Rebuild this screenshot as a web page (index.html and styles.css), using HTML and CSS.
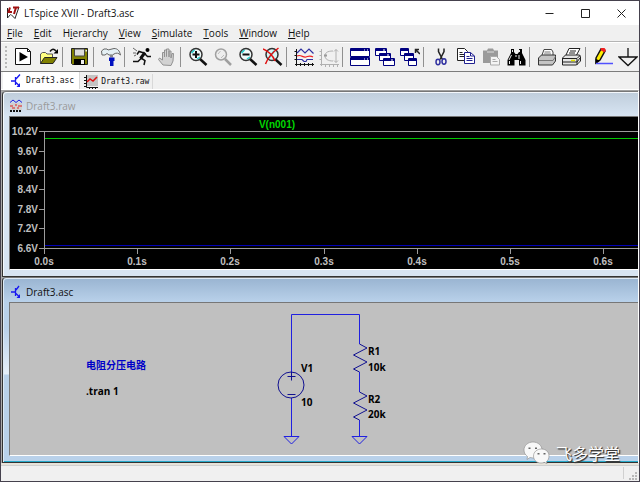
FILE: index.html
```html
<!DOCTYPE html>
<html lang="en">
<head>
    <meta charset="UTF-8">
    <meta name="viewport" content="width=device-width, initial-scale=1.0">
    <title>LTspice XVII - Draft3.asc</title>
    <link rel="stylesheet" href="styles.css">
</head>
<body>
<div class="app">

    <header class="titlebar">
        <svg class="logo" width="14" height="14" viewBox="0 0 14 14">
            <path d="M1.500 2v10l3-3.500M5 8.500l4 4L13 1" fill="none" stroke="#222" />
            <path d="M4 1.500L2.500 6H6M7 1.500h6M10 1.500L8 8" fill="none" stroke="#a01010" stroke-width="2" />
        </svg>
        <span class="title">LTspice XVII - Draft3.asc</span>
        <div class="controls">
            <button type="button" aria-label="Minimize"><svg width="9" height="9" viewBox="0 0 9 9"><path d="M.5 4.500h8" /></svg></button>
            <button type="button" aria-label="Maximize"><svg width="9" height="9" viewBox="0 0 9 9"><path d="M.5.5h8v8h-8z" /></svg></button>
            <button type="button" aria-label="Close"><svg width="9" height="9" viewBox="0 0 9 9"><path d="M.5.5l8 8M8.500.5l-8 8" /></svg></button>
        </div>
    </header>

    <nav class="menu">
        <button type="button"><u>F</u>ile</button>
        <button type="button"><u>E</u>dit</button>
        <button type="button">H<u>i</u>erarchy</button>
        <button type="button"><u>V</u>iew</button>
        <button type="button"><u>S</u>imulate</button>
        <button type="button"><u>T</u>ools</button>
        <button type="button"><u>W</u>indow</button>
        <button type="button"><u>H</u>elp</button>
    </nav>

    <div class="toolbar">
        <span class="grip"></span>
        <button type="button" aria-label="New schematic">
            <svg viewBox="0 0 20 20"><path d="M1.500 1.500h12l3 3v13h-15z" fill="#fff" stroke="#111" /><path d="M13.500 1.500v3h3" fill="none" stroke="#111" /><path d="M5.500 5v9.500l8.500-4.500z" /></svg>
        </button>
        <button type="button" aria-label="Open">
            <svg viewBox="0 0 20 20"><path d="M1.500 16.500V7l2-1.500h3L8 7h5.500v3" fill="#ffff80" stroke="#555" /><path d="M1.500 16.500l4-6h12.500l-4 6z" fill="#808000" stroke="#222" /><path d="M11 4.500c2-3 4-3 6-.5" fill="none" stroke="#111" stroke-width="1.500" /><path d="M19 2v4.500h-4.500z" /></svg>
        </button>
        <span class="sep"></span>
        <button type="button" aria-label="Save">
            <svg viewBox="0 0 20 20"><path d="M1.500 1.500h16v16h-15l-1-1z" fill="#808000" stroke="#222" /><path d="M4.500 2h10v7h-10z" fill="#dcdcdc" stroke="#444" /><path d="M4 12h11v6H4z" /><path d="M11 13h3v4h-3zM15.500 3H17v1.500h-1.500z" fill="#f0f0f0" /></svg>
        </button>
        <span class="sep"></span>
        <button type="button" aria-label="Control panel">
            <svg viewBox="0 0 20 20"><path d="M.5 4L3 2h3l1 1 6-1.500c3.500 0 5.500 2 6.500 6.500-2-2-4-2.500-6.500-1L11.500 8H8L6 6.500 4 8H1z" fill="#e4f0f4" stroke="#666" /><path d="M9 8h3v2.500H9z" fill="#888" /><path d="M8 10.500h5.500V14h-1v5H9v-5H8z" fill="#0010c0" /></svg>
        </button>
        <span class="sep"></span>
        <button type="button" aria-label="Run">
            <svg viewBox="0 0 20 20"><circle cx="15.500" cy="3" r="2" /><path d="M13 5.500l-4.500 6" stroke="#111" stroke-width="3" /><path d="M9 11l4 2.500-1 4.500M9 11.500l-3 3H1M12 6L7 4.500 5 7.500M13 7l2.500 2.500H19" fill="none" stroke="#111" stroke-width="1.500" /><path d="M1 1l4 3M1 6h3M2 9l2-1" stroke="#666" /></svg>
        </button>
        <button type="button" aria-label="Halt">
            <svg viewBox="0 0 20 20"><path d="M6 18L1.500 12.500 2.500 11 5.500 13V5.500h2V10 3h2v6.500V2H12v8V4h2v7l1-4.500h1.500L16 14l-2 4.500z" fill="#d2d2d2" stroke="#929292" /></svg>
        </button>
        <span class="sep"></span>
        <button type="button" aria-label="Zoom area">
            <svg viewBox="0 0 20 20"><path d="M12 12l6.500 6" stroke="#111" stroke-width="2.500" /><circle cx="8" cy="7.500" r="6" fill="#f0fafa" stroke="#333" stroke-width="1.500" /><path d="M3.500 6l3-3M12 10l-3 2" stroke="#20d0d0" stroke-width="1.500" /><path d="M8 4v7M4.500 7.500h7" stroke="#111" stroke-width="2" /></svg>
        </button>
        <button type="button" aria-label="Pan">
            <svg viewBox="0 0 20 20"><path d="M12 12l6 6" stroke="#a0a0a0" stroke-width="2.500" /><circle cx="8" cy="7.500" r="5.500" fill="#ededed" stroke="#a0a0a0" stroke-width="1.500" /><path d="M5 7l2.500-3M8 11l3-3" stroke="#bbb" /></svg>
        </button>
        <button type="button" aria-label="Zoom back">
            <svg viewBox="0 0 20 20"><path d="M12 12l6.500 6" stroke="#111" stroke-width="2.500" /><circle cx="8" cy="7.500" r="6" fill="#f0fafa" stroke="#333" stroke-width="1.500" /><path d="M3.500 6l3-3M12 10l-3 2" stroke="#20d0d0" stroke-width="1.500" /><path d="M4.500 7.500h7" stroke="#111" stroke-width="2" /></svg>
        </button>
        <button type="button" aria-label="Zoom to fit">
            <svg viewBox="0 0 20 20"><path d="M12 12l6.500 6" stroke="#111" stroke-width="2.500" /><circle cx="9" cy="7.500" r="6" fill="#d8f6f6" stroke="#333" stroke-width="1.500" /><path d="M11 4l-5 7" stroke="#20d0d0" stroke-width="1.500" /><path d="M0 2c5 2 10 7 12 12M15.500 1C10 5 5 10 2.500 17" fill="none" stroke="#e01010" stroke-width="1.500" /></svg>
        </button>
        <span class="sep"></span>
        <button type="button" aria-label="Pick visible traces">
            <svg viewBox="0 0 20 20"><path d="M2.500 2v17M1 17.500h19" stroke="#111" /><path d="M.5 4.500h2m-2 4h2m-2 4h2M6.500 16v3m4-3v3m4-3v3m4-3v3" stroke="#111" /><path d="M3 6l4-4 4 4 4-4 4.500 4.500M3 12.500h5l2 2h2l1-2h6" fill="none" stroke="#3030a0" stroke-width="1.200" /><path d="M3 9c4-2 6 2 9 1s4-2 7 0" fill="none" stroke="#f02020" stroke-width="1.200" /></svg>
        </button>
        <button type="button" aria-label="Autorange">
            <svg viewBox="0 0 20 20"><path d="M2.500 2v17M1 17.500h19M.5 4.500h2m-2 4h2m-2 4h2M6.500 17v3m4-3v3m4-3v3m4-3v3M17 2.500v13M15 4.500l2-2 2 2M15 13.500l2 2 2-2M14 4C8 4 6 6 6 9s3 5 8 5" fill="none" stroke="#b0b0b0" /><path d="M5 8.500h3" stroke="#999" stroke-width="2" /></svg>
        </button>
        <span class="sep"></span>
        <button type="button" aria-label="Tile windows">
            <svg viewBox="0 0 20 20"><path d="M.5 1.500h19v8H.5zM.5 10.500h19v8H.5z" fill="#fff" stroke="#000080" /><path d="M1 2h18v2H1zM1 11h18v2H1z" fill="#000080" /><path d="M14 3h1M17 3h1M14 12h1M17 12h1" stroke="#fff" /></svg>
        </button>
        <button type="button" aria-label="Cascade windows">
            <svg viewBox="0 0 20 20"><g fill="#fff" stroke="#000080"><path d="M.5 1.500h11v7H.5z" /><path d="M4.500 6.500h11v7h-11z" /><path d="M8.500 11.500h11v7h-11z" /></g><path d="M1 2h10v2H1zM5 7h10v2H5zM9 12h10v2H9z" fill="#000080" /><path d="M8 3h2M12 8h2M16 13h2" stroke="#fff" /></svg>
        </button>
        <button type="button" aria-label="Close all windows">
            <svg viewBox="0 0 20 20"><g fill="#fff" stroke="#000080"><path d="M.5 1.500h8v7h-8z" /><path d="M4.500 6.500h9v7h-9z" /><path d="M8.500 11.500h8v7h-8z" /></g><path d="M1 2h8v2H1zM5 7h8v2H5zM9 12h7v2H9z" fill="#000080" /><path d="M15.500 6V2.500H19M15.500 2.500L20 7" fill="none" stroke="#222" stroke-width="1.500" /></svg>
        </button>
        <span class="sep"></span>
        <button type="button" aria-label="Cut">
            <svg viewBox="0 0 20 20"><path d="M7.500 1.500v3l4 8M13 1.500v3l-4 8" fill="none" stroke="#222" stroke-width="1.500" /><g fill="none" stroke="#3030a0" stroke-width="1.500"><ellipse cx="7" cy="15" rx="2" ry="2.700" /><ellipse cx="13" cy="14.500" rx="2" ry="2.700" /></g></svg>
        </button>
        <button type="button" aria-label="Copy">
            <svg viewBox="0 0 20 20"><path d="M1.500 1.500h7l3 3v9h-10z" fill="#fff" stroke="#222" /><path d="M3.500 5.500h3m-3 2h5m-5 2h5" stroke="#222" /><path d="M8.500 5.500h6l4 3.500v7.500h-10z" fill="#fff" stroke="#202090" /><path d="M14.500 5.500V9h4M10.500 9.500h3m-3 2h6m-6 2h6" fill="none" stroke="#202090" /></svg>
        </button>
        <button type="button" aria-label="Paste">
            <svg viewBox="0 0 20 20"><path d="M2 3.500h4l1-2h5l1 2h4V16H2z" fill="#9a9a9a" /><path d="M6 5h7" stroke="#ddd" /><path d="M9.500 9.500h6l3 3V18h-9z" fill="#f4f4f4" stroke="#aaa" /><path d="M11.500 12.500h3m-3 2h5" stroke="#aaa" /></svg>
        </button>
        <button type="button" aria-label="Find">
            <svg viewBox="0 0 20 20"><path d="M5 2h3v3l1.500 2h2L13 5V2h3v4l3.500 7v5.500H13V13H8.500v5.500H1.500V13L5 6z" /><path d="M6.500 3v2M13.500 3v2M5.500 8L3 13M13 8v4M10 8v2M3.500 14v3M14.500 14v3" stroke="#e8e8e8" /></svg>
        </button>
        <span class="sep"></span>
        <button type="button" aria-label="Print">
            <svg viewBox="0 0 20 20"><path d="M5 8l2-5.500h7.500L16 5v4" fill="#fff" stroke="#444" /><path d="M1.500 11l3-3h14v6l-3 4h-14z" fill="#c4c4c4" stroke="#333" /><path d="M2 13.500h14l2.500-4M7.500 5h6M7 7h7" fill="none" stroke="#777" /></svg>
        </button>
        <button type="button" aria-label="Print preview">
            <svg viewBox="0 0 20 20"><path d="M4 8l3-6.500h11L14 9" fill="#fff" stroke="#222" /><path d="M.5 11l3-3h14l1 2v4l-4 4H.5z" fill="#e4e4e4" stroke="#222" /><path d="M1 11.500h14l3-3M1 15h14l3-4M15 12v6M8 4h6M7 6h6" fill="none" stroke="#222" /><path d="M9 13.500h4" stroke="#e0e000" stroke-width="1.500" /></svg>
        </button>
        <span class="sep"></span>
        <button type="button" aria-label="Wire">
            <svg viewBox="0 0 20 20"><path d="M3 11l5-9 4 2-5 9-4 3z" fill="#ffee00" stroke="#111" stroke-width="1.500" /><path d="M2.500 12v5L7 13.500z" /><path d="M8 1h3.500L13 3l-1.500 2.500L7.500 3z" fill="#f02020" /><path d="M3 16.500h17" stroke="#5050ff" stroke-width="1.500" /></svg>
        </button>
        <button type="button" aria-label="Ground">
            <svg viewBox="0 0 20 20"><path d="M10 1v9M1 10h18l-9 8.500z" fill="none" stroke="#111" stroke-width="1.300" /></svg>
        </button>
    </div>

    <div class="tabs">
        <button type="button" class="tab active">
            <svg width="16" height="16" viewBox="0 0 16 16"><path d="M3 8h4M7.500 4v8M8 6l4-4.500M8 9.500l3 3" fill="none" stroke="#1818f0" stroke-width="1.300" /><path d="M12 10v4H8.500z" fill="#1818f0" /></svg>
            Draft3.asc
        </button>
        <button type="button" class="tab">
            <svg width="16" height="16" viewBox="0 0 16 16"><path d="M3 1h12v11H3z" fill="#c4c4c4" /><path d="M3.500 1v12.500H15" fill="none" stroke="#111" /><path d="M1 3.500h2M1 6.500h2M1 9.500h2M1 12.500h2M6.500 13v2M9.500 13v2M12.500 13v2" stroke="#111" /><path d="M4 8l3-3 3 2 4-4" fill="none" stroke="#e01010" stroke-width="1.500" /></svg>
            Draft3.raw
        </button>
    </div>

    <main class="workspace">
        <section class="window">
            <div class="window-title">
                <svg width="14" height="14" viewBox="0 0 14 14"><path d="M1 4h12v7H1z" fill="#d0d0d0" /><path d="M1 3.500L4 1l3 2.500L10 1l3 2.500" fill="none" stroke="#2020e0" /><path d="M1 7h3M6 6h2M9 7h4M3 9h3M8 9h2" stroke="#e02020" /><path d="M1 12h12" stroke="#111" stroke-width="2" stroke-dasharray="2 1" /></svg>
                Draft3.raw
            </div>
            <div class="client">
                <svg class="plot" width="100%" height="152">
                    <!-- axes -->
                    <g class="axis">
                        <path d="M34.500 14v123" />
                        <path d="M29 14.500h6M29 34.500h6M29 53.500h6M29 72.500h6M29 92.500h6M29 111.500h6M29 131.500h6" />
                        <path d="M34.500 131v6M127.500 131v6M220.500 131v6M314.500 131v6M407.500 131v6M500.500 131v6M593.500 131v6" />
                        <line x1="34" y1="14.500" x2="100%" y2="14.500" />
                        <line x1="34" y1="131.500" x2="100%" y2="131.500" />
                    </g>
                    <!-- traces -->
                    <line class="trace-green" x1="35" y1="21.500" x2="100%" y2="21.500" />
                    <line class="trace-blue" x1="35" y1="128.500" x2="100%" y2="128.500" />
                    <text class="trace-name" x="267" y="11">V(n001)</text>
                    <g class="y-labels">
                        <text x="28" y="18">10.2V</text>
                        <text x="28" y="38">9.6V</text>
                        <text x="28" y="57">9.0V</text>
                        <text x="28" y="76">8.4V</text>
                        <text x="28" y="96">7.8V</text>
                        <text x="28" y="115">7.2V</text>
                        <text x="28" y="135">6.6V</text>
                    </g>
                    <g class="x-labels">
                        <text x="34" y="148">0.0s</text>
                        <text x="127" y="148">0.1s</text>
                        <text x="220" y="148">0.2s</text>
                        <text x="314" y="148">0.3s</text>
                        <text x="407" y="148">0.4s</text>
                        <text x="500" y="148">0.5s</text>
                        <text x="593" y="148">0.6s</text>
                    </g>
                </svg>
            </div>
        </section>

        <section class="window focused">
            <div class="window-title">
                <svg width="14" height="14" viewBox="0 0 14 14"><path d="M2 7h4M6.500 3v8M7 5l3-4M7 8.500l3 3" fill="none" stroke="#1818f0" stroke-width="1.300" /><path d="M11 9v4H7.500z" fill="#1818f0" /></svg>
                Draft3.asc
            </div>
            <div class="client">
                <svg class="schematic" width="100%" height="152">
                    <!-- wires and grounds -->
                    <path class="wire" d="M281.500 69V11.500h68V41M281.500 95v38M349.500 69v20M349.500 117v16M274 133.500h15l-7.500 7.500zM342 133.500h15l-7.500 7.500z" />
                    <!-- V1, R1, R2 -->
                    <g class="part">
                        <circle cx="281" cy="82" r="13" />
                        <path d="M277.500 73.500h8M281.500 69v8.500M277.500 91.500h8" />
                        <path d="M349.500 41l7.500 4-13.500 7 13.500 7-13.500 7 6 3" />
                        <path d="M349.500 89l7.500 4-13.500 7 13.500 7-13.500 7 6 3" />
                    </g>
                    <text class="comment" x="76" y="66">电阻分压电路</text>
                    <text x="76" y="92">.tran 1</text>
                    <text x="291" y="69">V1</text>
                    <text x="291" y="103">10</text>
                    <text x="358" y="52">R1</text>
                    <text x="358" y="68">10k</text>
                    <text x="358" y="100">R2</text>
                    <text x="358" y="115">20k</text>
                </svg>
            </div>
        </section>
    </main>

    <footer class="statusbar">
        <span class="pane"></span>
        <svg width="10" height="10" viewBox="0 0 10 10"><path d="M7 1h2v2H7zM4 4h2v2H4zM7 4h2v2H7zM1 7h2v2H1zM4 7h2v2H4zM7 7h2v2H7z" fill="#b8b8b8" /></svg>
    </footer>

    <div class="watermark">
        <svg width="28" height="24" viewBox="0 0 28 24">
            <g fill="#f8f8f8" stroke="#8a8a8a" stroke-width=".6">
                <path d="M10 1c5 0 9 3.500 9 8s-4 8-9 8l-3-.5L4 18.500l.5-3C2.500 14 1 12 1 9c0-4.500 4-8 9-8z" />
                <path d="M18.500 8c4.500 0 7.500 3 7.500 7 0 2.500-1 4.500-2.500 5.500l.5 2.200-2.500-1.200c-7 2-11-2-11-6.500 0-4 3.500-7 8-7z" />
            </g>
            <path d="M5.500 6.500h2v1.500h-2zM12 6.500h2v1.500h-2zM14.500 12h2v1.500h-2zM20.500 12h2v1.500h-2z" fill="#666" />
        </svg>
        <span lang="zh">飞多学堂</span>
    </div>
</div>
</body>
</html>
```
FILE: styles.css
```css
* {
    box-sizing: border-box;
}

body {
    margin: 0;
    font-family: "Open Sans", "Noto Sans", sans-serif;
    font-size: 10px;
    color: #111;
}

button {
    margin: 0;
    padding: 0;
    border: none;
    background: none;
    font: inherit;
    color: inherit;
}

.app {
    position: relative;
    display: flex;
    flex-direction: column;
    min-height: 100vh;
    border: 1px solid #45414d;
    background-color: #f0f0f0;
    overflow: hidden;
}

.titlebar {
    display: flex;
    align-items: center;
    height: 24px;
    padding-left: 5px;
    background-color: #fff;
}

.title {
    flex: 1;
    margin-left: 4px;
}

.controls {
    display: flex;
}

.controls button {
    display: flex;
    align-items: center;
    justify-content: center;
    width: 36px;
    height: 24px;
}

.controls svg {
    fill: none;
    stroke: #222;
}

.menu {
    display: flex;
    gap: 11px;
    height: 16px;
    padding-left: 6px;
    line-height: 16px;
}

.toolbar {
    display: flex;
    align-items: center;
    height: 31px;
    border-top: 1px solid #b4b4b4;
    border-bottom: 1px solid #7c7c7c;
    box-shadow: inset 0 1px #fff;
    overflow: hidden;
}

.toolbar button {
    flex: none;
    display: flex;
    justify-content: center;
    width: 25px;
}

.toolbar svg {
    width: 20px;
    height: 20px;
}

.grip {
    flex: none;
    width: 2px;
    height: 22px;
    margin: 0 4px;
    background: repeating-linear-gradient(#b8b8b8 0 2px, transparent 2px 4px);
}

.sep {
    flex: none;
    width: 6px;
    height: 20px;
    border-right: 4px solid transparent;
    border-left: 1px solid transparent;
    background-color: #909090;
    background-clip: padding-box;
}

.tabs {
    display: flex;
    align-items: flex-end;
    height: 18px;
    padding-left: 2px;
    border-bottom: 1px solid #fff;
    font-family: "DejaVu Sans Mono", monospace;
    font-size: 8px;
}

.tab {
    display: flex;
    align-items: center;
    gap: 2px;
    height: 15px;
    padding: 0 3px;
    border-right: 1px solid #d8d8d8;
}

.tab.active {
    height: 17px;
    padding: 0 5px;
    background-color: #fff;
}

.workspace {
    padding-left: 1px;
    border-top: 1px solid #a0a0a0;
    border-right: 1px solid #fff;
    background-color: #ababab;
}

.window {
    padding: 0 0 6px 6px;
    border: 1px solid #333;
    border-top-color: #777;
    border-right: none;
    border-radius: 4px 0 0 0;
    background-color: #d7e4f2;
    background-image: linear-gradient(#bfcddb, #d7e4f2 24px);
    box-shadow: inset 1px 1px #f4f8fc;
}

.window-title {
    display: flex;
    align-items: center;
    gap: 3px;
    height: 24px;
    padding: 3px 0 0;
    color: #9a9a9a;
}

.window.focused {
    background-color: #b9d1ea;
    background-image: linear-gradient(#99b4d1, #b9d1ea 24px, #b9d1ea 50px, #e6eff9 96px, #b9d1ea 97px, #b9d1ea);
    box-shadow: inset 1px 1px #dce9f6, inset 0 -1px #26a9c9;
}

.focused .window-title {
    color: #111;
}

.client {
    border: 1px solid #777;
    border-right: none;
    border-bottom-color: #fff;
}

.client svg {
    display: block;
}

.plot {
    background-color: #000;
    font-family: "Liberation Sans", Arial, sans-serif;
    font-weight: bold;
    fill: #c0c0c0;
}

.axis {
    fill: none;
    stroke: #9c9c9c;
}

.trace-green {
    stroke: #00c800;
}

.trace-blue {
    stroke: #0000b4;
}

.trace-name {
    fill: #00d800;
    text-anchor: middle;
}

.y-labels {
    text-anchor: end;
}

.x-labels {
    text-anchor: middle;
}

.schematic {
    background-color: #c0c0c0;
    font-family: "Open Sans", "Noto Sans", "Noto Sans CJK SC", sans-serif;
    font-weight: bold;
    fill: #000;
}

.wire {
    fill: none;
    stroke: #2020e0;
}

.part {
    fill: none;
    stroke: #101090;
}

.comment {
    fill: #0000c8;
}

.statusbar {
    flex: 1;
    display: flex;
    align-items: flex-end;
    justify-content: flex-end;
    min-height: 18px;
    border-top: 2px solid #e6e3da;
    box-shadow: inset 0 1px #d0d0d0;
}

.statusbar svg {
    margin-right: 1px;
}

.pane {
    flex: 1;
    align-self: stretch;
    margin: 2px 4px 2px 0;
    border-right: 1px solid #d0d0d0;
}

.watermark {
    position: absolute;
    right: 19px;
    bottom: 16px;
    display: flex;
    align-items: center;
    gap: 5px;
    font-family: "Noto Sans CJK SC", sans-serif;
    font-size: 16px;
    line-height: 24px;
    color: #fff;
    text-shadow: 1px 1px 1px #333, 1px 1px 1px #555;
}
```
